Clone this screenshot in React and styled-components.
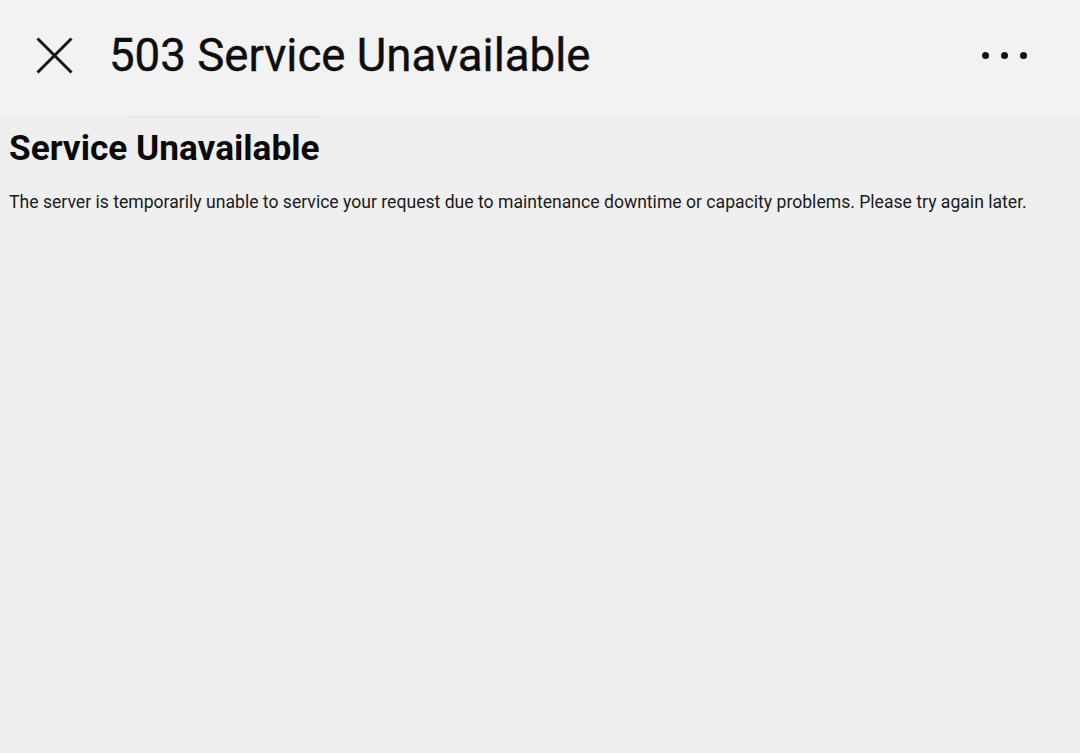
import styled, { createGlobalStyle } from 'styled-components'

const GlobalStyle = createGlobalStyle`
  html, body {
    margin: 0;
    padding: 0;
    background: #efefef;
    font-family: Roboto, "Liberation Sans", sans-serif;
    color: #111;
  }
`

const Bar = styled.header`
  position: relative;
  height: 117px;
  box-sizing: border-box;
  padding: 0 36px 7px;
  display: flex;
  align-items: center;
  background: #f2f2f2;

  &::after {
    content: '';
    position: absolute;
    left: 128px;
    width: 192px;
    bottom: 0;
    height: 1px;
    background: #e4e4e4;
  }
`

const IconButton = styled.button`
  border: none;
  background: none;
  padding: 0;
  display: flex;
  align-items: center;
  cursor: pointer;
  color: #161616;
`

const Title = styled.h2`
  flex: 1;
  margin: 0 0 0 36px;
  font-size: 45.6px;
  font-weight: 400;
  color: #0e0e0e;
  white-space: nowrap;
  -webkit-text-stroke: 0.4px #0e0e0e;
`

const Dots = styled.div`
  display: flex;
  gap: 12px;
  margin-right: 17px;

  span {
    width: 7px;
    height: 7px;
    border-radius: 50%;
    background: #111;
  }
`

const Page = styled.main`
  padding: 0 9px;
`

const Heading = styled.h1`
  margin: 10px 0 0;
  font-size: 35.2px;
  font-weight: 700;
  color: #0a0a0a;
`

const Text = styled.p`
  margin: 23px 0 0;
  font-size: 17.6px;
  color: #1a1a1a;
`

export default function App() {
  return (
    <>
      <GlobalStyle />
      <Bar>
        <IconButton aria-label="close">
          <svg width="37" height="37" viewBox="0 0 37 37" fill="none" stroke="currentColor" strokeWidth="3">
            <path d="M1.5 1.5 L35.5 35.5 M35.5 1.5 L1.5 35.5" />
          </svg>
        </IconButton>
        <Title>503 Service Unavailable</Title>
        <Dots>
          <span />
          <span />
          <span />
        </Dots>
      </Bar>
      <Page>
        <Heading>Service Unavailable</Heading>
        <Text>
          The server is temporarily unable to service your request due to maintenance downtime or capacity problems. Please try again later.
        </Text>
      </Page>
    </>
  )
}
